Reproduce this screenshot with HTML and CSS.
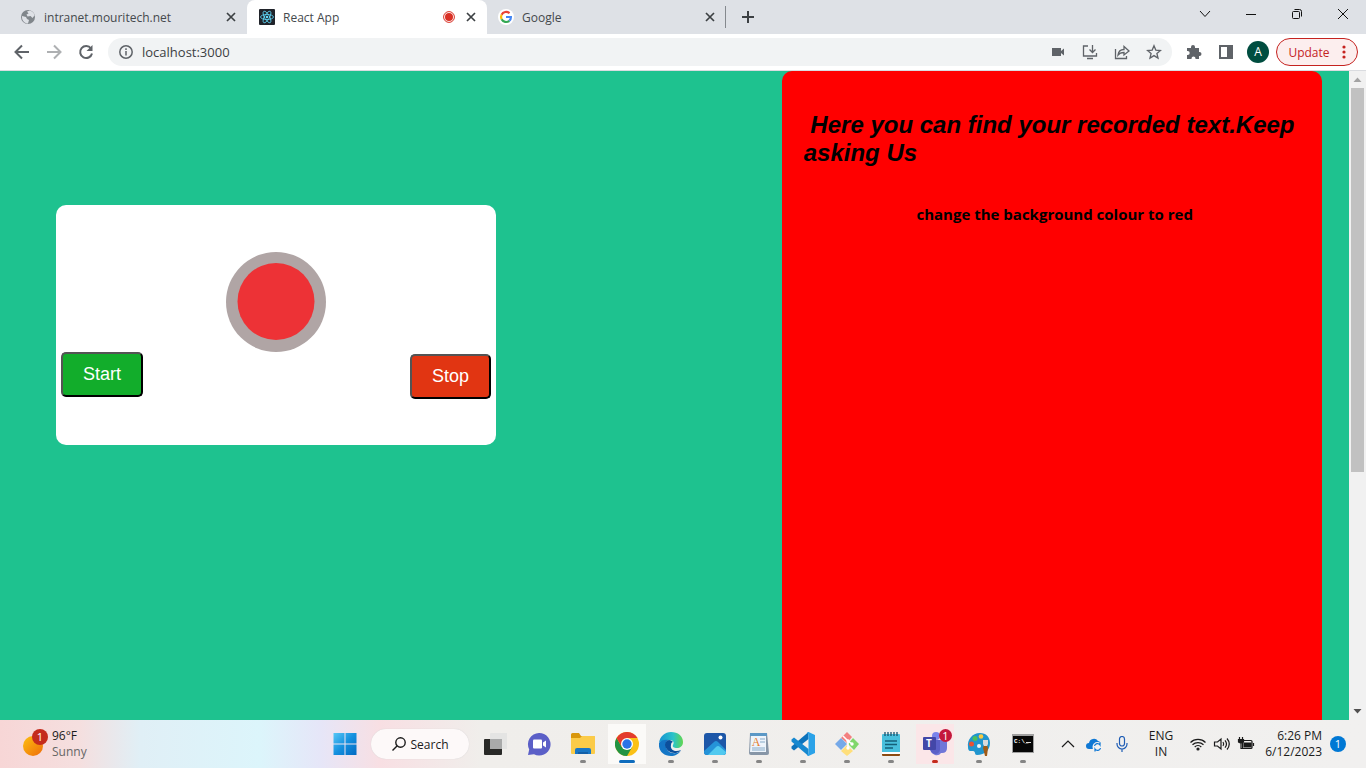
FILE: index.html
```html
<!DOCTYPE html>
<html lang="en">
<head>
    <meta charset="UTF-8" />
    <meta name="viewport" content="width=device-width, initial-scale=1.0" />
    <title>React App</title>
    <link rel="stylesheet" href="styles.css">
</head>
<body>

    <!-- tabs -->
    <header class="tabs">
        <div class="tab first">
            <svg class="favicon" viewBox="0 0 16 16"><circle cx="8" cy="8" r="7" fill="#80868b"/><path d="M2 7l4 1 1 2 2 1-1 3.500C5 14.500 2 12 2 8zM7 2.500l3-1c3 1 4.500 3 4.500 5l-2 2.500-2-2-3 .5-1-2 2-1z" fill="#dee1e6"/></svg>
            <span class="tab-title">intranet.mouritech.net</span>
            <button type="button" class="close" aria-label="Close tab"><svg viewBox="0 0 10 10"><path d="M1 1l8 8M9 1L1 9"/></svg></button>
        </div>
        <div class="tab active">
            <svg class="favicon" viewBox="0 0 16 16"><rect width="16" height="16" rx="1" fill="#20232a"/><g fill="none" stroke="#61dafb" stroke-width=".8"><ellipse cx="8" cy="8" rx="6.500" ry="2.500"/><ellipse cx="8" cy="8" rx="6.500" ry="2.500" transform="rotate(60 8 8)"/><ellipse cx="8" cy="8" rx="6.500" ry="2.500" transform="rotate(120 8 8)"/></g><circle cx="8" cy="8" r="1.300" fill="#61dafb"/></svg>
            <span class="tab-title">React App</span>
            <svg class="rec" viewBox="0 0 12 12"><circle cx="6" cy="6" r="5.400" fill="#fff" stroke="#d93025"/><circle cx="6" cy="6" r="4" fill="#d93025"/></svg>
            <button type="button" class="close" aria-label="Close tab"><svg viewBox="0 0 10 10"><path d="M1 1l8 8M9 1L1 9"/></svg></button>
        </div>
        <div class="tab last">
            <svg class="favicon" viewBox="0 0 16 16"><circle cx="8" cy="8" r="8" fill="#fff"/><g fill="none" stroke-width="2.200"><path d="M11.500 4.200A5 5 0 0 0 3.600 5.700" stroke="#ea4335"/><path d="M3.600 5.700a5 5 0 0 0 0 4.600" stroke="#fbbc05"/><path d="M3.600 10.300a5 5 0 0 0 7.700 1.500" stroke="#34a853"/><path d="M11.300 11.800A5 5 0 0 0 12.900 8H8" stroke="#4285f4"/></g></svg>
            <span class="tab-title">Google</span>
            <button type="button" class="close" aria-label="Close tab"><svg viewBox="0 0 10 10"><path d="M1 1l8 8M9 1L1 9"/></svg></button>
        </div>
        <button type="button" class="new-tab" aria-label="New tab"><svg viewBox="0 0 12 12"><path d="M6 0v12M0 6h12"/></svg></button>
        <div class="window-buttons">
            <button type="button" aria-label="Search tabs"><svg viewBox="0 0 12 12"><path d="M1 3l5 5.500L11 3"/></svg></button>
            <button type="button" aria-label="Minimize"><svg viewBox="0 0 12 12"><path d="M1 6.500h10"/></svg></button>
            <button type="button" aria-label="Restore"><svg viewBox="0 0 12 12"><rect x="1.500" y="3.500" width="7" height="7" rx="1"/><path d="M3.500 1.500h5a2 2 0 0 1 2 2v5"/></svg></button>
            <button type="button" aria-label="Close"><svg viewBox="0 0 12 12"><path d="M1 1l10 10M11 1L1 11"/></svg></button>
        </div>
    </header>

    <!-- address bar -->
    <nav class="toolbar">
        <button type="button" class="tool" aria-label="Back"><svg viewBox="0 0 16 16" class="line"><path d="M15 8H2M8 1.500L1.500 8 8 14.500"/></svg></button>
        <button type="button" class="tool off" aria-label="Forward"><svg viewBox="0 0 16 16" class="line"><path d="M1 8h13M8 1.500L14.500 8 8 14.500"/></svg></button>
        <button type="button" class="tool" aria-label="Reload"><svg viewBox="0 0 16 16" class="line"><path d="M13 4.500A6 6 0 1 0 14 9.500"/><path d="M14.500 1v6h-6z" fill="#5f6368" stroke="none"/></svg></button>
        <div class="address">
            <svg class="info" viewBox="0 0 16 16"><circle cx="8" cy="8" r="6.200"/><path d="M8 7v4.500M8 4.300v1.600"/></svg>
            <input type="text" class="url" value="localhost:3000" aria-label="Address">
            <button type="button" class="tool" aria-label="Camera"><svg viewBox="0 0 16 16"><path d="M2 4h9v3l3-2.500v7L11 9v3H2z"/></svg></button>
            <button type="button" class="tool" aria-label="Install"><svg viewBox="0 0 16 16" class="thin"><path d="M6 2H1.500v10h13V9M5 14.500h6M10.500 1v7M7.500 5.500l3 3 3-3"/></svg></button>
            <button type="button" class="tool" aria-label="Share"><svg viewBox="0 0 16 16" class="thin"><path d="M1.500 5v9.500h11V12M4 11c.5-4 2.500-5.500 6-5.500V2.500L15 7l-5 4V8.500C7.500 8.500 5.500 9 4 11z"/></svg></button>
            <button type="button" class="tool" aria-label="Bookmark"><svg viewBox="0 0 16 16" class="thin"><path d="M8 1.800l1.800 4.300 4.700.4-3.600 3 1.100 4.600-4-2.500-4 2.500 1.100-4.600-3.600-3 4.700-.4z"/></svg></button>
        </div>
        <button type="button" class="tool" aria-label="Extensions"><svg viewBox="0 0 16 16"><path d="M1 4h4V3a2 2 0 0 1 4 0v1h4v4h.500a2 2 0 0 1 0 4H13v3H9.500v-.5a2 2 0 0 0-4 0v.5H1v-4h.7a2 2 0 0 0 0-4H1z"/></svg></button>
        <button type="button" class="tool" aria-label="Side panel"><svg viewBox="0 0 16 16"><path d="M1 1h14v14H1zM3 3v10h6V3z" fill-rule="evenodd"/></svg></button>
        <button type="button" class="tool" aria-label="Profile"><span class="avatar">A</span></button>
        <button type="button" class="update">Update <svg viewBox="0 0 4 14"><circle cx="2" cy="2" r="1.600"/><circle cx="2" cy="7" r="1.600"/><circle cx="2" cy="12" r="1.600"/></svg></button>
    </nav>

    <!-- page -->
    <div class="view">
        <main class="page">
            <section class="recorder">
                <svg class="record-icon" viewBox="0 0 100 100"><circle cx="50" cy="50" r="50" fill="#b0a5a5"/><circle cx="50" cy="49.500" r="38.500" fill="#ed3236"/></svg>
                <div class="actions">
                    <button type="button" class="btn start">Start</button>
                    <button type="button" class="btn stop">Stop</button>
                </div>
            </section>
            <section class="result">
                <h2>&nbsp;Here you can find your recorded text.Keep asking Us</h2>
                <p>change the background colour to red</p>
            </section>
        </main>
        <div class="scrollbar">
            <svg viewBox="0 0 17 17"><path d="M4.500 11h8l-4-4.500z" fill="#a3a3a3"/></svg>
            <div class="track"><div class="thumb"></div></div>
            <svg viewBox="0 0 17 17"><path d="M4.500 6h8l-4 4.500z" fill="#505050"/></svg>
        </div>
    </div>

    <!-- taskbar -->
    <footer class="taskbar">
        <div class="weather">
            <svg viewBox="0 0 28 30"><defs><linearGradient id="sun" x1="0" y1="0" x2="1" y2="1"><stop offset="0" stop-color="#fdc010"/><stop offset="1" stop-color="#ee6c0a"/></linearGradient></defs><circle cx="11" cy="18" r="10" fill="url(#sun)"/><circle cx="18" cy="9" r="8" fill="#c42b1c"/><text x="18" y="13" class="count">1</text></svg>
            <div>96°F<br><span>Sunny</span></div>
        </div>

        <div class="apps">
            <button type="button" class="app" aria-label="Start menu"><svg viewBox="0 0 24 24"><defs><linearGradient id="win" x1="0" y1="0" x2="24" y2="24" gradientUnits="userSpaceOnUse"><stop offset="0" stop-color="#5ccbf7"/><stop offset=".5" stop-color="#1490df"/><stop offset="1" stop-color="#0067c0"/></linearGradient></defs><path d="M.5 1h11v10.500H.5zM12.500 1h11v10.500h-11zM.5 12.500h11V23H.5zM12.500 12.500h11V23h-11z" fill="url(#win)"/></svg></button>
            <button type="button" class="search"><svg viewBox="0 0 14 14"><circle cx="8.500" cy="5.500" r="4.700"/><path d="M5 9l-4.500 4.500"/></svg>Search</button>
            <button type="button" class="app" aria-label="Task view"><svg viewBox="0 0 24 24"><rect x="1" y="7" width="18" height="16" rx="1" fill="#292927"/><rect x="7" y="1" width="18" height="16" rx="1" fill="#e4e4e3"/><path d="M7 7h12v10H7z" fill="#a9aaaa"/></svg></button>
            <button type="button" class="app" aria-label="Chat"><svg viewBox="0 0 24 24"><path d="M12 1a11.300 11.300 0 1 1-5 21.300L1 23l1.200-5.500A11.300 11.300 0 0 1 12 1z" fill="#5b5fc7"/><rect x="6" y="7.500" width="9" height="9" rx="1" fill="#fff"/><path d="M16 10.500l3-2v7l-3-2z" fill="#fff"/></svg></button>
            <button type="button" class="app open" aria-label="File Explorer"><svg viewBox="0 0 24 24"><path d="M0 2.500Q0 1 1.500 1H8l2 3h12.500Q24 4 24 5.500V12H0z" fill="#d9970c"/><path d="M0 6h9l2-2h12q1 0 1 1v16q0 1-1 1H1q-1 0-1-1z" fill="#fbcb48"/><path d="M4 22v-4q0-2 2-2h12q2 0 2 2v4z" fill="#1976c4"/><path d="M7 20h10v2H7z" fill="#135fa7"/></svg></button>
            <button type="button" class="app open current" aria-label="Chrome"><svg viewBox="0 0 24 24"><circle cx="12" cy="12" r="12" fill="#fbc116"/><path d="M1.600 6A12 12 0 0 0 12 24l5.200-9H6.800z" fill="#229342"/><path d="M12 6h10.400a12 12 0 0 0-20.800 0l5.200 9z" fill="#e33b2e"/><circle cx="12" cy="12" r="6" fill="#fff"/><circle cx="12" cy="12" r="4.700" fill="#2a73e8"/></svg></button>
            <button type="button" class="app open" aria-label="Edge"><svg viewBox="0 0 24 24"><defs><linearGradient id="edge" x1="0" y1="0" x2="1" y2="0"><stop offset="0" stop-color="#1592d2"/><stop offset=".6" stop-color="#2bc3c9"/><stop offset="1" stop-color="#62d64e"/></linearGradient></defs><path d="M0 11C1 4 6 0 12 0c7 0 12 4 12 10 0 4-3 6-6 6-3 0-5-1-4-3 2-4-1-5-4-5-5 0-9 2-10 3z" fill="url(#edge)"/><path d="M0 11c2-3 6-4 10-3-3 1-4 4-3 7 1 4 5 7 10 6 2 0 4-2 5-3-2 4-6 6-10 6C4 24-1 18 0 11z" fill="#1476c6"/><path d="M10 8c-4 1-5 5-3 8 2 4 6 5 10 5 3-1 4-2 5-3-7 3-11-1-10-5 0-2 1-3 2-3-1-1-2-2-4-2z" fill="#0c4f9c"/></svg></button>
            <button type="button" class="app open" aria-label="Photos"><svg viewBox="0 0 24 24"><rect x="1" y="1" width="22" height="22" rx="3" fill="#1d57a8"/><path d="M1 19l10-9q2-2 4 0l8 8v2q0 3-3 3H4q-3 0-3-3z" fill="#2593d8"/><path d="M5 23l8-8q2-2 4 0l6 5q0 3-3 3z" fill="#51c9ef"/><circle cx="17.500" cy="5.500" r="2" fill="#fff"/></svg></button>
            <button type="button" class="app open" aria-label="WordPad"><svg viewBox="0 0 24 24"><path d="M3 1h17l2 20q0 2-2 2H4q-2 0-2-2z" fill="#8796a7"/><path d="M4 3h15v17H3z" fill="#edf4fb"/><path d="M3 1h17v3H3z" fill="#5b98c6"/><text x="9" y="14" class="serif">A</text><path d="M13 7h5M13 10h5M5 16h13M5 18h13" stroke="#86aac8"/></svg></button>
            <button type="button" class="app open" aria-label="Visual Studio Code"><svg viewBox="0 0 24 24"><path d="M17.500 0v7L3 18.500.500 16.500v-2z" fill="#0d73bc"/><path d="M.5 9.500v-2L3 5.500 17.500 17v7z" fill="#1688d0"/><path d="M17.500 0L24 3v18l-6.500 3q-1 0-1.500-1 1.500 0 1.500-2V3q0-2-1.500-2 .5-1 1.500-1z" fill="#2ba2e8"/></svg></button>
            <button type="button" class="app open" aria-label="Git"><svg viewBox="0 0 24 24"><path d="M12 0l5 5-5 6-6-5z" fill="#f38080"/><path d="M18 6l6 6-5 6-6-6z" fill="#80d76c"/><path d="M12 13l6 6-6 5-6-5z" fill="#ffdf7b"/><path d="M6 6l6 6-6 6-6-6z" fill="#76a9e8"/><path d="M8 4l5 5v7M13 9l4 3" fill="none" stroke="#fff" stroke-width="1.500"/><circle cx="13" cy="9" r="1.700" fill="#fff"/><circle cx="13" cy="16" r="1.700" fill="#fff"/><circle cx="17" cy="12" r="1.700" fill="#fff"/></svg></button>
            <button type="button" class="app open" aria-label="Notepad"><svg viewBox="0 0 24 24"><rect x="3" y="19" width="18" height="5" rx="1" fill="#8c4b12"/><rect x="3" y="2" width="18" height="19" rx="1" fill="#48bfdc"/><path d="M3 20h18v2H3z" fill="#fff"/><path d="M6 0v4M9 0v4M12 0v4M15 0v4M18 0v4" stroke="#17506c" stroke-width="1.300"/><path d="M6 9h12M6 12.500h12M6 16h8" stroke="#146079" stroke-width="1.600"/></svg></button>
            <button type="button" class="app open alert" aria-label="Teams"><svg viewBox="0 0 24 24"><circle cx="13" cy="4" r="4" fill="#7b83eb"/><path d="M9 8h15v8q0 5-5 5h-1q-2 3-6 2-5-2-5-7z" fill="#7076d8"/><path d="M8 8h9v10q-1 4-5 4-5-1-5-7z" fill="#5b5fc7"/><rect y="5" width="13" height="13" rx="1" fill="#4347a8"/><text x="6" y="15" class="letter">T</text></svg><span class="badge">1</span></button>
            <button type="button" class="app open" aria-label="Paint"><svg viewBox="0 0 24 24"><path d="M13 1C5 1 0 8 1 15c0 5 3 4 5 4 3 0 1 4 4 4 8 0 13-5 13-12C23 5 19 1 13 1z" fill="#2095ce"/><circle cx="8" cy="6.500" r="2.500" fill="#4dc05b"/><circle cx="14" cy="4.500" r="2.300" fill="#f8c842"/><circle cx="4.500" cy="12" r="2.500" fill="#e85234"/><circle cx="12" cy="14" r="2" fill="#e9f4f8"/><path d="M17 13h3l1 3-1 8h-2l-2-8z" fill="#a05b18"/><path d="M16 8h5v4l-1 2h-3l-1-2z" fill="#d8dadd"/></svg></button>
            <button type="button" class="app open" aria-label="Command Prompt"><svg viewBox="0 0 24 24"><rect x="1" y="2" width="22" height="19" fill="#a0a0a0"/><rect x="2" y="4" width="20" height="16" fill="#070707"/><text x="3" y="11" class="prompt">C:\_</text><path d="M15 10.500h5" stroke="#ddd"/></svg></button>
        </div>

        <div class="tray">
            <svg class="small" viewBox="0 0 16 16"><path d="M2 11l6-6 6 6"/></svg>
            <svg class="small wide" viewBox="0 0 16 16"><path d="M3 13a3 3 0 0 1 0-6 5 5 0 0 1 9-2 4 4 0 0 1 3 4v4z" fill="#0f78d4" stroke="none"/><circle cx="11.500" cy="11" r="5" fill="#f3f2f1" stroke="none"/><path d="M8.500 10a3 3 0 0 1 5.500-1V6.500M14.500 12A3 3 0 0 1 9 13v2.500" stroke="#0f78d4"/></svg>
            <svg class="small wide mic" viewBox="0 0 16 16"><rect x="5.500" y=".5" width="5" height="9.500" rx="2.500"/><path d="M3 7v1a5 5 0 0 0 10 0V7M8 13v3"/></svg>
            <div class="lang">ENG<br>IN</div>
            <svg class="small" viewBox="0 0 16 16"><path d="M.5 6.500a10.500 10.500 0 0 1 15 0M2.500 8.800a7.800 7.800 0 0 1 11 0M4.700 11a4.700 4.700 0 0 1 6.600 0"/><circle cx="8" cy="13" r="1" fill="#1b1b1b"/></svg>
            <svg class="small" viewBox="0 0 16 16"><path d="M.5 6v4h3L7 13V3L3.500 6zM9 6q1.500 2 0 4M11 4.300q3 3.700 0 7.400M13 2.500q4.500 5.500 0 11"/></svg>
            <svg class="small" viewBox="0 0 16 16"><rect x="4.500" y="4.500" width="9.500" height="8" rx="1"/><path d="M6 7h7v4H6z" fill="#1b1b1b"/><path d="M15.500 7v3M1.500 1v3M4.500 1v3M3 6v6.500h3"/><path d="M.5 3.500h5V6q-2.500 2-5 0z" fill="#1b1b1b"/></svg>
            <div class="clock">6:26 PM<br>6/12/2023</div>
            <span class="notify">1</span>
        </div>
    </footer>

</body>
</html>
```
FILE: styles.css
```css
* {
    box-sizing: border-box;
}
body {
    margin: 0;
    height: 100vh;
    display: flex;
    flex-direction: column;
    overflow: hidden;
    font-family: "Open Sans", "Noto Sans", sans-serif;
    font-size: 12px;
    color: #1b1b1b;
}
button {
    font-family: inherit;
    font-size: inherit;
    padding: 0;
    border: none;
    background: none;
    display: flex;
    align-items: center;
    justify-content: center;
    cursor: pointer;
}
svg {
    display: block;
    flex: none;
}

/* tabs */
.tabs {
    display: flex;
    height: 34px;
    background: #dee1e6;
}
.tab {
    display: flex;
    align-items: center;
    width: 240px;
    padding: 0 11px 0 12px;
    color: #45494d;
}
.tab.first {
    width: 247px;
    padding-left: 20px;
}
.tab.active {
    background: #fff;
    border-radius: 8px 8px 0 0;
}
.tab.last {
    width: 239px;
    padding-left: 11px;
    padding-right: 10px;
    border-right: 1px solid #85898e;
    border-image: linear-gradient(transparent 20%, #85898e 20%, #85898e 80%, transparent 80%) 1;
}
.favicon {
    width: 16px;
    height: 16px;
    margin-right: 8px;
}
.tab-title {
    flex: 1;
    white-space: nowrap;
}
.rec {
    width: 12px;
    height: 12px;
    margin-right: 11px;
}
.close svg {
    width: 10px;
    height: 10px;
    stroke: #3c4043;
    stroke-width: 1.7;
}
.new-tab {
    width: 44px;
}
.new-tab svg {
    width: 12px;
    height: 12px;
    stroke: #3c4043;
    stroke-width: 2;
}
.window-buttons {
    display: flex;
    height: 28px;
    margin-left: auto;
}
.window-buttons button {
    width: 46px;
}
.window-buttons svg {
    width: 12px;
    height: 12px;
    fill: none;
    stroke: #111;
}

/* address bar */
.toolbar {
    display: flex;
    align-items: center;
    height: 37px;
    padding: 0 8px 0 6px;
    background: #fff;
    border-bottom: 1px solid #dadce0;
}
.tool {
    width: 32px;
    height: 28px;
    flex: none;
}
.tool svg {
    width: 16px;
    height: 16px;
    fill: #5f6368;
}
.tool svg.line {
    fill: none;
    stroke: #5f6368;
    stroke-width: 2;
}
.tool svg.thin {
    fill: none;
    stroke: #5f6368;
    stroke-width: 1.3;
}
.tool.off {
    opacity: 0.5;
}
.address {
    flex: 1;
    display: flex;
    align-items: center;
    height: 28px;
    margin: 0 6px;
    padding: 0 2px 0 10px;
    border-radius: 14px;
    background: #f1f3f4;
}
.info {
    width: 16px;
    height: 16px;
    fill: none;
    stroke: #5f6368;
    stroke-width: 1.5;
}
.url {
    flex: 1;
    min-width: 0;
    margin-left: 8px;
    padding: 0;
    border: none;
    outline: none;
    background: none;
    font-family: inherit;
    font-size: 13px;
    color: #3c4043;
}
.avatar {
    width: 22px;
    line-height: 22px;
    border-radius: 50%;
    background: #004d40;
    color: #fff;
}
.update {
    width: 82px;
    height: 28px;
    margin-left: 2px;
    gap: 12px;
    border: 1px solid #c5221f;
    border-radius: 14px;
    background: #fceeee;
    color: #c5221f;
}
.update svg {
    width: 4px;
    height: 14px;
    fill: #c5221f;
}

/* page */
.view {
    flex: 1;
    min-height: 0;
    display: flex;
}
.page {
    flex: 1;
    display: flex;
    justify-content: space-between;
    align-items: flex-start;
    padding: 0 2% 0 56px;
    background: #1ec28f;
}
.recorder {
    width: 440px;
    height: 240px;
    margin-top: 134px;
    padding: 47px 5px 0;
    border-radius: 10px;
    background: #fff;
}
.record-icon {
    width: 100px;
    height: 100px;
    margin: 0 auto;
}
.actions {
    display: flex;
    justify-content: space-between;
    min-height: 47px;
}
.btn {
    height: 45px;
    padding: 10px 20px;
    border: 2px outset #000;
    border-radius: 5px;
    font-family: "Liberation Sans", Arial, sans-serif;
    font-size: 18px;
    color: #fff;
}
.start {
    background: #12ad2b;
}
.stop {
    align-self: flex-end;
    background: #e13512;
}
.result {
    width: 43%;
    max-width: 540px;
    height: 100%;
    padding: 40px 16px 0 22px;
    border-radius: 10px 10px 0 0;
    background: #f00;
    color: #000;
}
.result h2 {
    margin: 0 0 36px;
    font: italic bold 24px/28px "Liberation Sans", Arial, sans-serif;
}
.result p {
    margin: 0;
    text-align: center;
    font-size: 15px;
    font-weight: bold;
    line-height: 22px;
}
.scrollbar {
    display: flex;
    flex-direction: column;
    width: 17px;
    background: #f1f1f1;
}
.scrollbar svg {
    width: 17px;
    height: 17px;
}
.track {
    flex: 1;
    padding: 0 2px;
}
.thumb {
    height: 62.5%;
    background: #c1c1c1;
}

/* taskbar */
.taskbar {
    display: grid;
    grid-template-columns: 1fr auto 1fr;
    align-items: center;
    height: 48px;
    padding-left: 2px;
    background: linear-gradient(90deg, #f7d6d6 0, #f5dfdf 80px, #e0eff6 140px, #dcf5fb 260px, #e6e6f8 320px, #f8dfe3 380px, #f0eeeb 480px, #f1f0ef 100%);
}
.weather {
    display: flex;
    gap: 2px;
    padding-left: 20px;
    line-height: 16px;
}
.weather svg {
    width: 28px;
    height: 30px;
}
.weather span {
    color: #666;
}
.count {
    fill: #fff;
    font-size: 11px;
    text-anchor: middle;
}
.apps {
    display: flex;
    align-items: center;
}
.app {
    position: relative;
    width: 44px;
    height: 48px;
}
.app svg {
    width: 24px;
    height: 24px;
}
.open::after {
    content: "";
    position: absolute;
    left: 50%;
    bottom: 5px;
    width: 6px;
    height: 3px;
    border-radius: 2px;
    background: #858585;
    transform: translateX(-50%);
}
.current {
    background: linear-gradient(#fbfaf8, #fbfaf8) center / 38px 40px no-repeat;
}
.current::after {
    width: 16px;
    background: #0f6cbd;
}
.alert {
    background: linear-gradient(#fbe6e8, #fbe6e8) center / 38px 40px no-repeat;
}
.alert::after {
    background: #c42b1c;
}
.badge {
    position: absolute;
    top: 9px;
    right: 5px;
    width: 13px;
    line-height: 13px;
    border-radius: 50%;
    background: #c4183c;
    color: #fff;
    font-size: 11px;
}
.serif {
    fill: #e57c2d;
    font: 12px "Liberation Serif", serif;
    text-anchor: middle;
}
.letter {
    fill: #fff;
    font: bold 10px "Open Sans", sans-serif;
    text-anchor: middle;
}
.prompt {
    fill: #fff;
    font: bold 6px "Liberation Mono", monospace;
}
.search {
    width: 98px;
    height: 30px;
    margin: 0 4px;
    gap: 5px;
    border-radius: 15px;
    background: #fdf9f9;
    box-shadow: 0 0 1px #ccc;
    color: #1b1b1b;
}
.search svg {
    width: 14px;
    height: 14px;
    fill: none;
    stroke: #1b1b1b;
    stroke-width: 1.4;
}
.tray {
    display: flex;
    align-items: center;
    justify-content: flex-end;
    padding-right: 20px;
    line-height: 16px;
}
.small {
    width: 24px;
    height: 16px;
    fill: none;
    stroke: #1b1b1b;
    stroke-width: 1.2;
}
.wide {
    width: 28px;
}
.mic {
    stroke: #1f5db5;
}
.lang {
    width: 50px;
    text-align: center;
}
.clock {
    width: 64px;
    text-align: right;
}
.notify {
    width: 16px;
    line-height: 16px;
    margin-left: 8px;
    border-radius: 50%;
    background: #0078d4;
    color: #fff;
    font-size: 11px;
    text-align: center;
}
```
